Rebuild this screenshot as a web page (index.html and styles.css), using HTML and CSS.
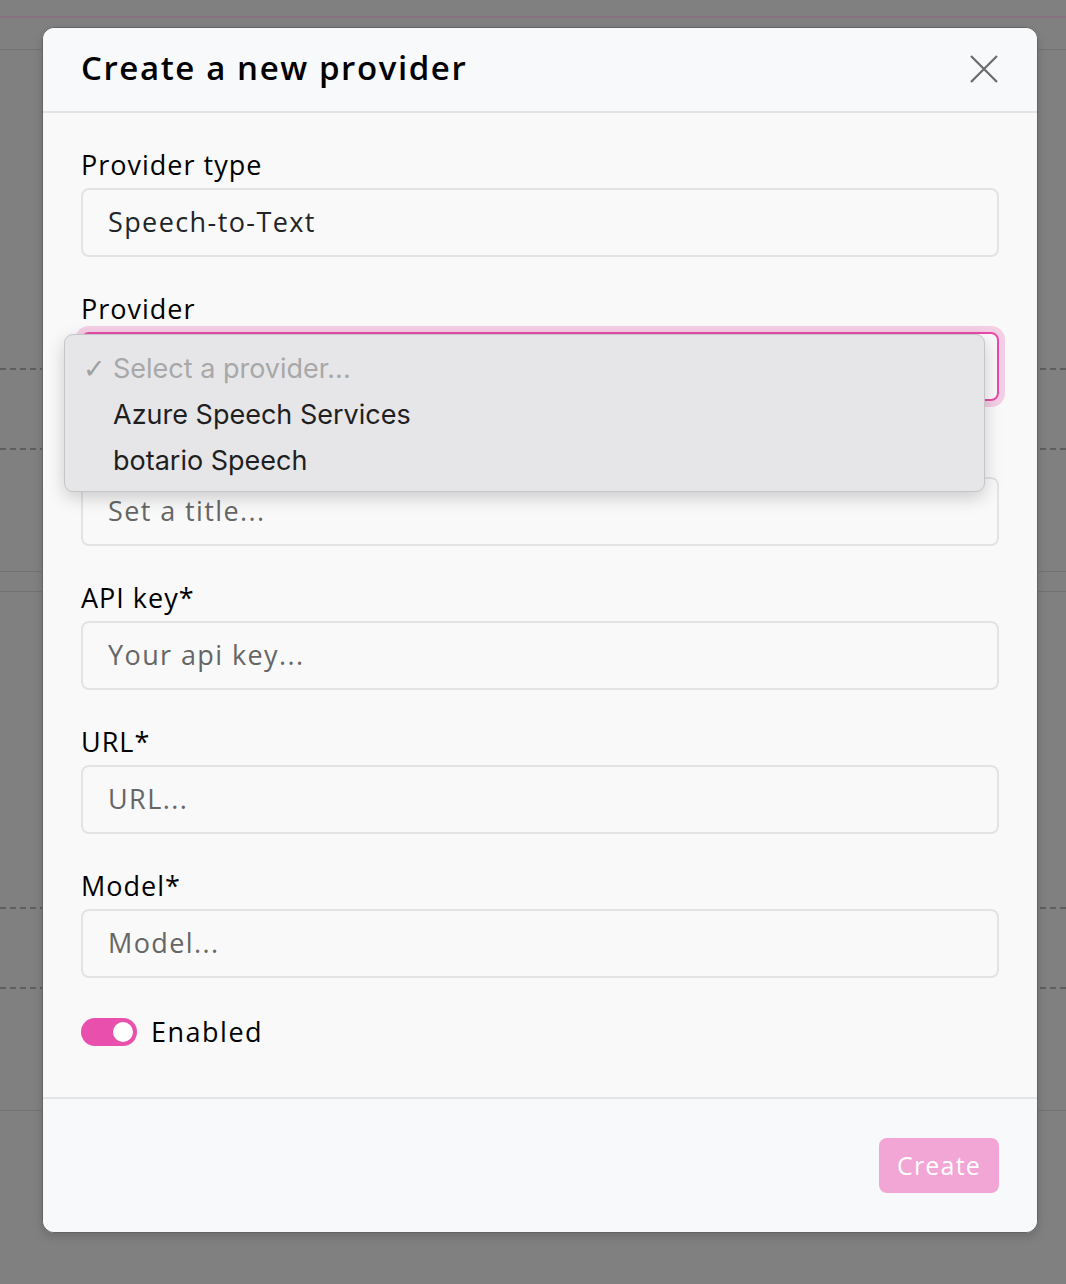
FILE: index.html
```html
<!DOCTYPE html>
<html lang="en">
<head>
  <meta charset="UTF-8">
  <title>Create a new provider</title>
  <link rel="stylesheet" href="styles.css">
</head>
<body>

<div id="page">
  <div class="topbar"></div>
  <div class="navbar"></div>
  <div class="row dashed" style="height: 318px"></div>
  <div class="row dashed" style="height: 78px"></div>
  <div class="row solid" style="height: 121px"></div>
  <div class="row solid" style="height: 19px"></div>
  <div class="row dashed" style="height: 315px"></div>
  <div class="row dashed" style="height: 78px"></div>
  <div class="row solid" style="height: 121px"></div>
</div>

<div id="backdrop">
  <div class="modal">
    <div class="modal-header">
      <h2>Create a new provider</h2>
      <button class="close" aria-label="Close">
        <svg width="30" height="30" viewBox="0 0 30 30">
          <path d="M2 2 L28 28 M28 2 L2 28" stroke="#6b6b6b" stroke-width="2.2" fill="none"/>
        </svg>
      </button>
    </div>

    <div class="modal-body">
      <div class="field">
        <label>Provider type</label>
        <div class="input">Speech-to-Text</div>
      </div>

      <div class="field">
        <label>Provider</label>
        <div class="input focused"></div>
        <div class="menu">
          <div class="option muted"><span class="check">✓</span>Select a provider...</div>
          <div class="option">Azure Speech Services</div>
          <div class="option">botario Speech</div>
        </div>
      </div>

      <div class="field">
        <label>Title*</label>
        <div class="input placeholder">Set a title...</div>
      </div>

      <div class="field">
        <label>API key*</label>
        <div class="input placeholder">Your api key...</div>
      </div>

      <div class="field">
        <label>URL*</label>
        <div class="input placeholder">URL...</div>
      </div>

      <div class="field">
        <label>Model*</label>
        <div class="input placeholder">Model...</div>
      </div>

      <div class="switch-row">
        <span class="switch"><span class="knob"></span></span>
        <span>Enabled</span>
      </div>
    </div>

    <div class="modal-footer">
      <button class="btn-create" disabled>Create</button>
    </div>
  </div>
</div>

</body>
</html>
```

FILE: styles.css
```css
body {
  margin: 0;
  padding: 0;
  background-color: #808080;
  font-family: "Open Sans", "Noto Sans", sans-serif;
  height: 1284px;
  overflow: hidden;
}

#page {
  display: flex;
  flex-direction: column;
}

#page .topbar {
  height: 16px;
  border-bottom: 2px solid #86737f;
}

#page .navbar {
  height: 31px;
  border-bottom: 1px solid #727272;
}

#page .row.dashed {
  border-bottom: 2px dashed #5e5e5e;
}

#page .row.solid {
  border-bottom: 1px solid #727272;
}

#backdrop {
  position: absolute;
  top: 0;
  left: 0;
  right: 0;
  bottom: 0;
  padding: 27px 28px 0 42px;
}

.modal {
  width: 994px;
  border: 1px solid #646464;
  border-radius: 12px;
  background-color: #f9f9f9;
  box-shadow: 0 4px 10px rgba(0, 0, 0, 0.15);
}

.modal-header {
  display: flex;
  align-items: center;
  justify-content: space-between;
  height: 83px;
  padding: 0 38px;
  background-color: #f8f9fa;
  border-bottom: 2px solid #e4e4e4;
  border-radius: 12px 12px 0 0;
}

.modal-header h2 {
  margin: 0 0 4px;
  font-size: 33px;
  font-weight: 600;
  color: #000;
  letter-spacing: 1.6px;
}

.close {
  border: none;
  background: none;
  padding: 0;
  width: 30px;
  height: 30px;
  margin: 0 0 2px;
}

.modal-body {
  padding: 32px 38px 44px;
}

.field {
  position: relative;
  margin-bottom: 32.3px;
}

.field label {
  display: block;
  font-size: 27px;
  line-height: 39px;
  letter-spacing: 1px;
  color: #000;
  margin-bottom: 4px;
}

.input {
  height: 65px;
  border: 2px solid #e3e3e3;
  border-radius: 8px;
  padding: 0 25px;
  font-size: 27px;
  line-height: 63px;
  letter-spacing: 1.4px;
  color: #212529;
}

.input.placeholder {
  color: #666;
}

.input.focused {
  border-color: #e84aab;
  box-shadow: 0 0 0 6px rgba(233, 79, 173, 0.25);
}

.menu {
  position: absolute;
  top: 45px;
  left: -17px;
  width: 921px;
  height: 158px;
  padding-top: 11px;
  box-sizing: border-box;
  background-color: #e6e6e8;
  border: 1px solid #c5c5c7;
  border-radius: 9px;
  box-shadow: 0 6px 18px rgba(0, 0, 0, 0.18);
  font-family: Inter, "Liberation Sans", sans-serif;
  z-index: 2;
}

.menu .option {
  height: 46px;
  line-height: 46px;
  padding-left: 48px;
  font-size: 27px;
  color: #1f1f1f;
  position: relative;
}

.menu .option.muted {
  color: #a8a8a8;
}

.menu .check {
  position: absolute;
  left: 18px;
  color: #a0a0a0;
  font-family: "DejaVu Sans", sans-serif;
  font-size: 27px;
  font-weight: bold;
}

.switch-row {
  display: flex;
  align-items: center;
  gap: 14px;
  height: 42px;
  font-size: 27px;
  letter-spacing: 1.5px;
  color: #000;
}

.switch {
  width: 56px;
  height: 28px;
  border-radius: 14px;
  background-color: #e94fad;
  display: flex;
  align-items: center;
  justify-content: flex-end;
  padding: 0 4px;
  box-sizing: border-box;
}

.switch .knob {
  width: 20px;
  height: 20px;
  border-radius: 50%;
  background-color: #fff;
}

.modal-footer {
  display: flex;
  justify-content: flex-end;
  padding: 39px 38px;
  background-color: #f8f9fa;
  border-top: 2px solid #e4e4e4;
  border-radius: 0 0 12px 12px;
}

.btn-create {
  width: 120px;
  height: 55px;
  border: none;
  border-radius: 8px;
  background-color: #f2a6d6;
  color: #fff;
  font-family: inherit;
  font-size: 25px;
  letter-spacing: 1.2px;
}
```
